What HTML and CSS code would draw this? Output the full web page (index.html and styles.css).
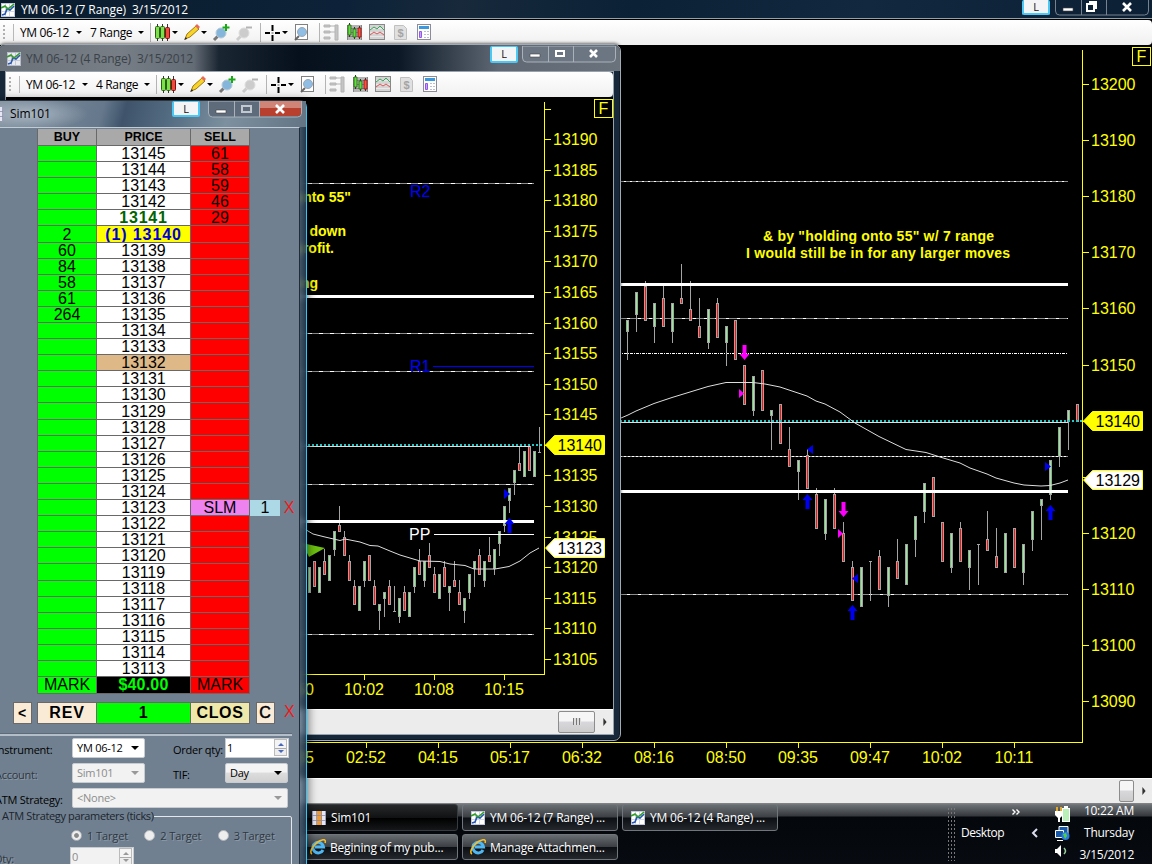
FILE: index.html
```
<!DOCTYPE html>
<html>
<head>
    <meta charset="utf-8">
    <title>YM 06-12</title>
    <link rel="stylesheet" href="styles.css">
</head>
<body>
    <svg class="defs">
        <defs>
            <symbol id="i-chart" viewBox="0 0 14 14">
                <rect x=".5" y=".5" width="13" height="13" fill="#fff" stroke="#c4c8dc"/>
                <path d="M1 4.5h12M1 8.5h12M4.5 1v12M8.5 1v12" stroke="#d4d6e8"/>
                <path d="M1 12l3-1 2-5 3 1 4-4" fill="none" stroke="#2456b8" stroke-width="1.6"/>
                <path d="M0 5l4-2 3 3 6-5" fill="none" stroke="#30a020" stroke-width="1.6"/>
            </symbol>
            <symbol id="i-grid" viewBox="0 0 14 14">
                <path d="M0 0h14v14H0z" fill="#e6e6f4"/><path d="M5 0h5v14H5z" fill="#f09a30"/>
                <path d="M0 4.5h14M0 9.5h14M4.5 0v14M9.5 0v14M.5 0v14M13.5 0v14" stroke="#8c8ca8" stroke-width=".8"/>
            </symbol>
            <symbol id="i-ie" viewBox="0 0 16 16">
                <path d="M13 11a5.3 5.3 0 1 1 .5-3H5" fill="none" stroke="#4eb6f0" stroke-width="3"/>
                <path d="M2 15C-2 13 5 3 12 1c3-1 4 1 3 3" fill="none" stroke="#f4bd28" stroke-width="1.6"/>
            </symbol>
            <symbol id="i-tools" viewBox="0 0 290 24">
                <g stroke="#b4b4b4"><path d="M1.500 3v19M111.500 3v19M170.500 3v19"/></g>
                <g stroke-width="1">
                    <path d="M8.500 4v17M13.500 4v17M18.500 4v17" stroke="#333"/>
                    <rect x="6.500" y="6.500" width="4" height="12" rx="1" fill="#7be04a" stroke="#286010"/>
                    <rect x="11.500" y="6.500" width="4" height="12" rx="1" fill="#7be04a" stroke="#286010"/>
                    <rect x="16.500" y="7.500" width="4" height="11" rx="1" fill="#f04a3c" stroke="#801010"/>
                </g>
                <path d="M23 11h6l-3 3zM52 11h6l-3 3zM133 11h6l-3 3z" fill="#000"/>
                <path d="M36 19l2-5 9-8 3 3-9 8z" fill="#f8d428" stroke="#a07810"/><path d="M46 6l2-2 3 3-2 2z" fill="#e86a5c"/><path d="M35 20l2-3 1 2z" fill="#222"/>
                <path d="M65 20l4-4" stroke="#777" stroke-width="3"/><circle cx="72" cy="13" r="5" fill="#84b6dc" stroke="#b8c8d4"/>
                <path d="M77 4v7M73.500 7.500h7" stroke="#18a818" stroke-width="2"/>
                <path d="M88 20l4-4" stroke="#ccc" stroke-width="3"/><circle cx="95" cy="13" r="5" fill="#ccc" stroke="#ddd"/><path d="M97 7.500h6" stroke="#b4b4b4" stroke-width="2"/>
                <path d="M116 13h5M126 13h5M123.500 5v6M123.500 15v6" stroke="#000" stroke-width="2"/><path d="M122.500 13h2" stroke="#555"/>
                <rect x="146.500" y="4.500" width="12" height="15" fill="#fff" stroke="#808080"/><path d="M146 20l4-4" stroke="#666" stroke-width="2"/><circle cx="153" cy="12" r="4.500" fill="#8fbde4" stroke="#9aa8b4"/>
                <path d="M175 5h6v2h-6zM175 11h6v2h-6zM175 17h6v2h-6zM186 5h3v15h-3zM181 6h5M181 12h5" fill="#c4c4c4" stroke="#b4b4b4"/>
                <rect x="198" y="5" width="15" height="15" fill="#b4b4b4"/><path d="M198 8.500h15M198 12.500h15M198 16.500h15M198.500 5v15M212.500 5v15" stroke="#777" stroke-width=".8"/>
                <path d="M200.500 3v14M205.500 7v12M210.500 6v13" stroke="#333"/>
                <path d="M199 5h3v10h-3zM204 9h3v8h-3z" fill="#5ce03c" stroke="#286010" stroke-width=".8"/><path d="M209 8h3v9h-3z" fill="#ff5040" stroke="#901010" stroke-width=".8"/>
                <rect x="220.500" y="4.500" width="15" height="15" fill="#d4d4d4" stroke="#888"/><path d="M221 8.500h14M221 12.500h14M221 16.500h14" stroke="#e8e8e8"/>
                <path d="M221 10l4-3 3 2 3-3 4 4" fill="none" stroke="#38a858"/><path d="M221 15l4-3 3 2 3-2 4 3" fill="none" stroke="#e05858"/>
                <path d="M245.500 5.500h9l3 3v11h-12z" fill="#e0e0e0" stroke="#c0c0c0"/><text x="251.500" y="17" class="dollar">$</text>
                <rect x="268.500" y="4.500" width="13" height="15" fill="#fff" stroke="#8c8c98"/><path d="M270 6h10v3h-10z" fill="#3c98dc"/><path d="M270.500 11.500h2v6h-2z" fill="#c8a0ff" stroke="#9458e8"/>
                <path d="M275 11.500h5M275 14.500h5M275 17.500h5" stroke="#b8c0d8" stroke-dasharray="2 1"/>
            </symbol>
        </defs>
    </svg>

    <div class="desktop">
        <!-- 7 range chart -->
        <div class="win win-main">
            <div class="titlebar">
                <svg class="ico14"><use href="#i-chart"/></svg><span class="title">YM 06-12 (7 Range)&nbsp; 3/15/2012</span>
                <div class="link">L</div>
                <div class="caps">
                    <svg class="cap-svg" viewBox="0 0 95 16">
                        <path d="M.5 0v11q0 4 4 4h85q4 0 4-4V0M26.500 0v15M51.500 0v15" class="cap-line"/>
                        <path d="M8 8h10v3H8z" class="glyph"/><path d="M34 2h7v7M32 4h7v7h-7z" class="glyph-o"/>
                        <path d="M68 3l8 8M76 3l-8 8" class="glyph-x"/>
                    </svg>
                </div>
            </div>
            <div class="toolbar">
                <i class="grip"></i><i class="sep"></i><span class="pick">YM 06-12</span><i class="arr"></i><span class="pick range">7 Range</span><i class="arr"></i>
                <svg class="tools"><use href="#i-tools"/></svg>
            </div>
            <svg class="chart" id="chart7" viewBox="0 45 1152 733"></svg>
            <div class="scroll"><div class="thumb thumb-sm"></div><i class="sarrow"></i></div>
        </div>

        <!-- 4 range chart -->
        <div class="win win-small">
            <div class="titlebar">
                <svg class="ico14"><use href="#i-chart"/></svg><span class="title">YM 06-12 (4 Range)&nbsp; 3/15/2012</span>
                <div class="link">L</div>
                <div class="caps">
                    <svg class="cap-svg" viewBox="0 0 95 17">
                        <path d="M.5 0v12q0 4 4 4h85q4 0 4-4V0z" fill="#6c7682" class="cap-line"/>
                        <path d="M26.500 0v16M51.500 0v16" class="cap-line"/>
                        <path d="M8 8h10v3H8z" class="glyph"/><path d="M34 5h8v5h-8z" class="glyph-o"/>
                        <path d="M68 4l7 7M75 4l-7 7" class="glyph-x"/>
                    </svg>
                </div>
            </div>
            <div class="inner">
                <div class="toolbar">
                    <i class="grip"></i><i class="sep"></i><span class="pick">YM 06-12</span><i class="arr"></i><span class="pick range">4 Range</span><i class="arr"></i>
                    <svg class="tools"><use href="#i-tools"/></svg>
                </div>
                <svg class="chart" id="chart4" viewBox="6 97 607 612"></svg>
                <div class="scroll"><div class="thumb"></div><i class="sarrow"></i></div>
            </div>
        </div>

        <div class="taskbar">
            <div class="tasks">
                <div class="task active"><svg class="ico14"><use href="#i-grid"/></svg>Sim101</div>
                <div class="task"><svg class="ico14"><use href="#i-chart"/></svg>YM 06-12 (7 Range) ...</div>
                <div class="task"><svg class="ico14"><use href="#i-chart"/></svg>YM 06-12 (4 Range) ...</div>
                <div class="task"><svg class="ico16"><use href="#i-ie"/></svg>Begining of my pub...</div>
                <div class="task"><svg class="ico16"><use href="#i-ie"/></svg>Manage Attachmen...</div>
            </div>
            <div class="dots"></div>
            <div class="desk"><svg class="more" viewBox="0 0 8 6"><path d="M1 .5l2.500 2.500L1 5.500M5 .5L7.500 3 5 5.500" fill="none" stroke="#fff" stroke-width="1.400"/></svg><span>Desktop</span></div>
            <svg class="tray" viewBox="0 0 44 61">
                <path d="M11 26l-4 4 4 4" fill="none" stroke="#dde" stroke-width="2"/>
                <rect x="36.500" y="5.500" width="7" height="13" fill="#b8f0b8" stroke="#fff"/><path d="M38 3h4v2h-4z" fill="#fff"/>
                <path d="M31 4v5M35 4v5" stroke="#e8a820" stroke-width="2"/><path d="M29 8h8v4l-3 3v4h-2v-4l-3-3z" fill="#fff"/>
                <path d="M33 23.500h9v9h-9z" fill="#1858a8" stroke="#fff"/><path d="M29.500 27.500h8v7h-8zM31 37.500h6" fill="#1858a8" stroke="#fff"/>
                <circle cx="39.500" cy="33" r="4" fill="#2878e0"/><path d="M37 31l3-1 1 3-2 3z" fill="#50d040"/>
                <path d="M29 46h2l4-4v12l-4-4h-2z" fill="#fff"/><path d="M38 45q3 3 0 6" fill="none" stroke="#9c9" stroke-width="1.500"/>
            </svg>
            <div class="clock"><span>10:22 AM</span><span>Thursday</span><span>3/15/2012</span></div>
        </div>

        <!-- DOM / order entry -->
        <div class="win win-sim">
            <div class="titlebar">
                <svg class="ico14"><use href="#i-grid"/></svg><span class="title">Sim101</span>
                <div class="link">L</div>
                <div class="caps">
                    <svg class="cap-svg" viewBox="0 0 95 17">
                        <path d="M.5 0v12q0 4 4 4h85q4 0 4-4V0z" fill="#5d6b7a" class="cap-line"/>
                        <path d="M51 0h42v12q0 3-4 3H51z" fill="#b8402e"/><path d="M51 0h42v7H51z" fill="#d08478"/>
                        <path d="M26.500 0v16M51.500 0v16" class="cap-line"/>
                        <path d="M8 9h10v3H8z" class="glyph"/><path d="M34 5h9v6h-9z" class="glyph-o dim"/>
                        <path d="M68 4l8 8M76 4l-8 8" class="glyph-x"/>
                    </svg>
                </div>
            </div>
            <div class="sim-body">
                <div class="ladder" id="ladder"></div>
                <div class="actions">
                    <div class="ab lt">&lt;</div><div class="ab rev">REV</div><div class="ab qty">1</div><div class="ab clos">CLOS</div><div class="ab c">C</div><div class="x">X</div>
                </div>
                <div class="form">
                    <div class="frow r1"><label>Instrument:</label><div class="sel">YM 06-12<i class="arr"></i></div><label class="l2">Order qty:</label><div class="spin">1<i class="ud"></i></div></div>
                    <div class="frow r2"><label class="off">Account:</label><div class="sel off">Sim101<i class="arr"></i></div><label class="l2">TIF:</label><div class="sel day">Day<i class="arr"></i></div></div>
                    <div class="frow r3"><label>ATM Strategy:</label><div class="sel wide off">&lt;None&gt;<i class="arr"></i></div></div>
                    <div class="group">
                        <div class="legend">ATM Strategy parameters (ticks)</div>
                        <div class="radios"><i class="rad on"></i><span>1 Target</span><i class="rad"></i><span>2 Target</span><i class="rad"></i><span>3 Target</span></div>
                        <div class="frow r4"><label class="off">Qty:</label><div class="spin off">0<i class="ud"></i></div></div>
                    </div>
                </div>
            </div>
        </div>
    </div>
    <script src="script.js"></script>
</body>
</html>
```

FILE: styles.css
```
body { margin: 0; background: #000; overflow: hidden; }
.defs { position: absolute; width: 0; height: 0; }
.desktop {
    position: relative; width: 1152px; height: 864px; overflow: hidden; background: #000;
    font-family: "Open Sans", "Noto Sans", sans-serif; font-size: 12px; color: #000;
}
svg { display: block; flex: none; }
i { flex: none; }
.ico14 { width: 14px; height: 14px; }
.ico16 { width: 16px; height: 16px; }

/* windows */
.win { position: absolute; box-sizing: border-box; display: flex; flex-direction: column; }
.titlebar { display: flex; align-items: flex-start; flex: none; box-sizing: border-box; white-space: nowrap; }
.titlebar .title { flex: 1; line-height: 17px; letter-spacing: -0.1px; }
.link {
    width: 24px; height: 13px; border: 2px solid #4cc8f4; border-top-width: 1px; border-radius: 2px; background: #f4f4f6;
    font-size: 11px; line-height: 13px; text-align: center; color: #111;
}
.cap-svg { width: 95px; height: 17px; }
.cap-line { stroke: #a9b1ba; stroke-width: 1; }
.win-main .cap-line { fill: none; stroke: #77828e; }
.glyph { fill: #fff; stroke: #444; stroke-width: .6; }
.glyph-o { fill: none; stroke: #fff; stroke-width: 2; }
.glyph-o.dim { stroke: #c2c8d0; }
.glyph-x { stroke: #fff; stroke-width: 2.6; }

.win-main { left: 0; top: 0; width: 1152px; height: 803px; }
.win-main > .titlebar {
    height: 20px; padding-left: 1px; color: #fff; border-bottom: 1px solid #000;
    background: linear-gradient(100deg, #0a1c2e 0%, #0d2238 30%, #17293b 40%, #0b2136 55%, #12283e 75%, #0b2035 100%);
    box-shadow: inset 0 -1px #93a0aa;
}
.win-main > .titlebar .ico14 { margin: 3px 6px 0 0; }
.win-main > .titlebar .title { line-height: 19px; }
.win-main .link { margin-right: 5px; border-top: 0; }
.win-main .caps { margin-right: 2px; }
.win-main .cap-svg { height: 16px; }

.toolbar {
    height: 25px; flex: none; display: flex; align-items: center; box-sizing: border-box; padding-left: 3px;
    background: linear-gradient(#fff, #f0f0f0); border-radius: 0 4px 4px 0; white-space: nowrap;
}
.grip { width: 2px; height: 15px; background: repeating-linear-gradient(#b0b0b0 0 2px, transparent 2px 4px); }
.sep { width: 1px; height: 17px; margin: 0 6px 0 8px; background: #b8b8b8; }
.pick { width: 53px; letter-spacing: -0.35px; }
.pick.range { width: 45px; margin-left: 8px; }
.toolbar .arr { margin-left: 3px; }
.arr { border: 3px solid transparent; border-top-color: #000; border-bottom: 0; }
.tools { width: 290px; height: 24px; margin: -1px 0 0 5px; }
.dollar { font: bold 11px "Liberation Sans", sans-serif; fill: #a4a4a4; text-anchor: middle; }
.chart { width: 100%; flex: 1; min-height: 0; background: #000; }

.scroll { height: 25px; flex: none; display: flex; justify-content: flex-end; align-items: center; background: #ececec; border-top: 1px solid #fff; box-sizing: border-box; }
.thumb {
    width: 35px; height: 20px; border: 1px solid #8c8c8c; border-radius: 2px; position: relative;
    background: linear-gradient(#f6f6f6 45%, #d8d8dc 50%, #ccc);
}
.thumb::after { content: ""; position: absolute; left: 14px; top: 6px; width: 8px; height: 7px; background: repeating-linear-gradient(90deg, #777 0 1px, #ddd 1px 3px); }
.thumb-sm { width: 13px; }
.thumb-sm::after { display: none; }
.sarrow { border: 4px solid transparent; border-left-color: #333; border-right: 0; margin: 0 6px 0 8px; transform: scaleX(.8); }

.win-small {
    left: -2px; top: 44px; width: 623px; height: 697px; padding: 0 7px 5px 7px; border: 1px solid #a2abb3; border-radius: 7px;
    background: #16283a;
    box-shadow: 0 -1px 3px #0008, inset 0 0 0 1px #0e1a26;
}
.win-small > .titlebar {
    height: 26px; margin: 0 -7px; padding: 1px 3px 0 8px;
    background: linear-gradient(90deg, #6a7179 0, #777e86 120px, #636b75 195px, #1a2632 220px, #06101d 300px, #0c1826 400px, #5f6874 500px, #6a727c 100%);
    border-radius: 6px 6px 0 0; color: #3a4249;
}
.win-small .titlebar .ico14 { margin: 6px 5px 0 0; opacity: .85; }
.win-small .title { line-height: 25px; }
.win-small .link { margin-right: 4px; height: 14px; }
.inner { flex: 1; display: flex; flex-direction: column; min-height: 0; border: 1px solid #98a2ac; margin: 0 -1px; }

/* sim101 */
.win-sim {
    left: -12px; top: 100px; width: 319px; height: 780px; padding-right: 6px; border-top: 1px solid #2a3540; border-right: 1px solid #31c8f5;
    border-radius: 0 7px 0 0; background: linear-gradient(90deg, transparent 312px, #a4c4e055 312px, #31506c88), #18293cb0;
    backdrop-filter: blur(3px); box-shadow: 2px 0 9px #0007;
}
.win-sim > .titlebar {
    height: 26px; margin-right: -6px; padding: 0 3px 0 0;
    background: radial-gradient(ellipse 60px 16px at 40px 13px, #a9b6c2, transparent), linear-gradient(105deg, #8795a2, #65788c 36%, #3f546b 43%, #526a80 56%, #7c909f 75%, #637585 100%);
}
.win-sim .titlebar .ico14 { margin: 6px 7px 0 1px; }
.win-sim .title { line-height: 25px; }
.win-sim .link { margin-right: 8px; }
.sim-body { flex: 1; background: #708090; border-top: 1px solid #c0ccd6; border-right: 1px solid #202c38; padding-top: 1px; }
.ladder, .actions { font-family: "Liberation Sans", Arial, sans-serif; font-size: 16px; }
.ladder { margin-left: 50px; }
.row { display: grid; grid-template-columns: 59px 94px 59px 31px 16px; height: 16px; line-height: 16px; text-align: center; }
.row.tall { height: 17px; line-height: 18px; }
.row.head { font-size: 12.5px; font-weight: bold; line-height: 17px; height: 17px; }
.cell { border-right: 1px solid #696969; border-bottom: 1px solid #696969; overflow: hidden; }
.cell:first-child { border-left: 1px solid #696969; margin-left: -1px; }
.head .cell { background: #a9a9a9; }
.buy { background: #0f0; }
.price { background: #fff; }
.sell { background: #f00; }
.price.last { color: #006400; font-weight: bold; letter-spacing: .8px; }
.price.pos { background: #ff0; color: #0000d8; font-weight: bold; letter-spacing: .9px; }
.price.open { background: #deb887; }
.sell.slm { background: #ee82ee; }
.stop { background: #add8e6; margin-right: 1px; }
.x { color: #f01818; }
.row.mark { line-height: 16px; }
.row.mark .price { background: #000; color: #0f0; font-weight: bold; letter-spacing: .2px; }
.actions { display: flex; margin: 8px 0 0 25px; line-height: 20px; font-weight: bold; text-align: center; letter-spacing: .8px; }
.ab { height: 20px; border: 1px solid #696969; box-sizing: content-box; background: #faebd7; }
.ab.lt { width: 17px; font-size: 14px; }
.ab.rev { width: 58px; margin-left: 5px; border-right: 0; }
.ab.qty { width: 93px; background: #0f0; }
.ab.clos { width: 58px; border-left: 0; background: #eee8aa; letter-spacing: .6px; }
.ab.c { width: 17px; margin-left: 6px; font-weight: normal; -webkit-text-stroke: .5px; }
.actions .x { margin-left: 9px; font-weight: normal; }

.form { border-top: 2px solid #b4bec8; margin: 10px 7px 0 0; padding: 1px 0 0 7px; font-size: 11px; box-shadow: 0 -1px #5d6b79; white-space: nowrap; }
.frow { display: flex; align-items: center; letter-spacing: -0.25px; }
.frow label { width: 77px; padding-top: 3px; }
.frow label.off, .radios span { color: #2f3740; text-shadow: 1px 1px #8d9aa8; }
.frow .l2 { width: 52px; margin-left: 28px; }
.sel, .spin { box-sizing: border-box; height: 20px; width: 73px; padding: 0 5px 0 4px; background: #fff; border: 1px solid #c8ccd0; border-radius: 2px; display: flex; align-items: center; justify-content: space-between; }
.sel .arr { border-width: 4px 4px 0; }
.sel.off, .spin.off { background: #f2f2f2; color: #8c8c8c; }
.sel.off .arr { border-top-color: #999; }
.sel.day { width: 63px; background: linear-gradient(#f4f4f4 45%, #ddd 50%, #d0d0d0); }
.sel.wide { width: 216px; }
.spin { width: 64px; padding: 0 1px; align-items: flex-start; border-radius: 0; line-height: 17px; }
.ud { width: 13px; height: 17px; background: linear-gradient(#f4f4f4 8px, #aaa 8px 9px, #eee 9px); border: 1px solid #bbb; box-sizing: border-box; position: relative; }
.ud::before, .ud::after { content: ""; position: absolute; left: 3px; top: 3px; border: 3px solid transparent; border-top: 0; border-bottom-color: #4868b8; }
.ud::after { top: 10px; border: 3px solid transparent; border-bottom: 0; border-top-color: #4868b8; }
.off .ud::before { border-bottom-color: #999; }
.off .ud::after { border-top-color: #999; }
.r1 { height: 21px; }
.r2 { height: 29px; }
.r3 { height: 21px; }
.group { margin-left: -20px; padding-left: 18px; border: 1px solid #e4e8ec; margin-top: 8px; height: 80px; border-radius: 2px; }
.group .legend { width: 152px; margin: -9px 0 0 3px; line-height: 15px; background: #708090; color: #1c242c; padding-left: 5px; letter-spacing: -.36px; }
.radios { display: flex; align-items: center; margin: 3px 0 0 77px; height: 18px; }
.radios span { width: 61px; margin-left: 5px; letter-spacing: -.1px; }
.rad { width: 9px; height: 9px; border: 1px solid #b0b4b8; border-radius: 50%; background: #eee; }
.rad.on { background: radial-gradient(#888 30%, #eee 45%); }
.r4 { margin-top: 3px; }
.r4 .spin { width: 64px; margin-left: -1px; }

/* taskbar */
.taskbar {
    position: absolute; left: 0; top: 803px; width: 1152px; height: 61px; padding-left: 302px; box-sizing: border-box;
    display: flex; color: #fff; background: linear-gradient(#888 0, #6b7075 2px, #34383c 13px, #04070b 14px, #070b11 100%);
}
.tasks { width: 480px; flex: none; display: grid; grid-template-columns: 156px 156px 156px; gap: 3px 4px; grid-template-rows: 27px 26px; padding-top: 1px; }
.task {
    box-sizing: border-box; border: 1px solid #70767c; border-radius: 3px; display: flex; align-items: center; gap: 5px; padding-left: 8px;
    background: linear-gradient(#686d72, #3c4044 48%, #0c0f13 52%, #24282c); letter-spacing: -0.2px; white-space: nowrap;
}
.task.active { background: linear-gradient(#26282a, #101214 50%, #000 52%, #151719); border-color: #383c40; padding-left: 9px; }
.task .ico16 { margin: 0 -1px 0 -1px; }
.dots { width: 8px; height: 54px; margin: 4px 0 0 165px; background: radial-gradient(circle, #777 .8px, transparent 1px) 0 0 / 3px 4px; }
.desk { width: 50px; margin-left: 6px; display: flex; flex-direction: column; letter-spacing: -0.45px; }
.more { width: 9px; height: 6px; margin: 6px 0 9px 50px; }
.tray { width: 44px; height: 61px; margin-left: 15px; }
.clock { flex: 1; display: flex; flex-direction: column; align-items: flex-end; padding-right: 18px; line-height: 22px; margin-top: -3px; letter-spacing: -0.25px; white-space: nowrap; }

/* chart contents */
.lbl { font: 16px "Liberation Sans", Arial, sans-serif; fill: #ff0; }
.lbl.dark { fill: #000; }
.lbl.white { fill: #fff; }
.lbl.blue { fill: #00f; }
.note { font: bold 14px "Liberation Sans", Arial, sans-serif; fill: #ff0; }
```

FILE: script.js
```
var GREEN = "#8fee8f", RED = "#ff1010";

function line(x1, y1, x2, y2, color, width, dash) {
    return '<path d="M' + x1 + ' ' + y1 + 'L' + x2 + ' ' + y2 + '" fill="none" stroke="' + color + '" stroke-width="' + (width || 1) + '"' +
        (dash ? ' stroke-dasharray="' + dash + '"' : '') + '/>';
}
function text(x, y, s, cls, anchor, len) {
    return '<text x="' + x + '" y="' + y + '" class="' + cls + '" text-anchor="' + (anchor || "start") + '"' +
        (len ? ' textLength="' + len + '"' : '') + '>' + s + '</text>';
}
function shape(d, color) {
    return '<path d="' + d + '" fill="' + color + '"/>';
}
function level(x1, x2, y, dash) {
    return line(x1, y + .5, x2, y + .5, "#8c8c8c") + line(x1, y + .5, x2, y + .5, "#fff", 1, dash);
}
function last(x1, x2, y) {
    return line(x1, y + 1.5, x2 - 14, y + 1.5, "#ddd") + line(x1, y, x2, y, "#20c8c8", 2, "2 2");
}

// bar = [high, top, bottom, low, g/r/t/b]
function candles(x, step, bars) {
    return bars.map(function (b, i) {
        var c = x + i * step, s = line(c + .5, b[0], c + .5, b[3], "#a4a4a4");
        if (b[4] == "t" || b[4] == "b") {
            var y = b[4] == "t" ? b[0] : b[3];
            return s + line(c - 1, y + .5, c + 2, y + .5, "#a4a4a4");
        }
        return s + '<rect x="' + (c - 1) + '" y="' + b[1] + '" width="3" height="' + (b[2] - b[1]) + '" fill="#a4a4a4"/>' +
            '<rect x="' + c + '" y="' + (b[1] + 1) + '" width="1" height="' + (b[2] - b[1] - 2) + '" fill="' + (b[4] == "g" ? GREEN : RED) + '"/>';
    }).join("");
}
function up(x, y) { return shape("M" + x + " " + y + "l5 6h-3v9h-4v-9h-3z", "#0000f0"); }
function down(x, y) { return shape("M" + x + " " + y + "l5-6h-3v-9h-4v9h-3z", "#f0f"); }
function tag(x, y, w, s, fill) {
    return '<path d="M' + x + ' ' + y + 'l9-9.500h' + (w - 9) + 'v19h-' + (w - 9) + 'z" fill="' + fill + '" stroke="#ff0"/>' + text(x + 12, y + 6, s, "lbl dark");
}
function curve(pts) {
    return '<polyline points="' + pts + '" fill="none" stroke="#ddd" stroke-width="1"/>';
}

var bars7 = [
    [320,320,332,360,"g"],[292,292,315,332,"g"],[281,286,321,321,"r"],[303,303,327,343,"g"],[285,298,327,327,"r"],[303,303,332,343,"g"],
    [264,298,304,304,"r"],[281,309,321,321,"r"],[298,326,338,338,"r"],[309,309,343,349,"g"],[298,303,338,338,"r"],[326,326,343,366,"g"],
    [320,320,360,360,"r"],[365,365,405,405,"r"],[376,376,411,416,"g"],[370,370,411,411,"r"],[410,410,416,450,"g"],[404,404,444,444,"r"],
    [427,449,467,467,"r"],[460,460,472,500,"g"],[449,455,489,489,"r"],[488,494,529,529,"r"],[499,499,534,540,"g"],[488,494,529,529,"r"],
    [522,533,562,562,"r"],[561,567,601,601,"r"],[567,567,607,607,"g"],[561,0,0,601,"t"],[550,556,590,590,"r"],[567,567,596,607,"g"],
    [539,561,579,579,"r"],[544,544,585,585,"g"],[516,516,540,557,"g"],[483,483,512,523,"g"],[477,477,517,517,"r"],[522,522,562,562,"r"],
    [533,533,568,573,"g"],[522,528,562,562,"r"],[550,550,568,590,"g"],[544,0,0,585,"t"],[511,539,551,551,"r"],[528,556,568,568,"r"],
    [533,533,573,573,"g"],[528,528,568,568,"r"],[544,544,573,585,"g"],[511,511,540,551,"g"],[499,499,506,540,"g"],[460,460,495,500,"g"],
    [427,427,457,467,"g"],[410,410,422,450,"g"],[404,404,422,422,"r"]
];
var bars4 = [
    [567,567,593,593,"g"],[561,561,587,587,"r"],[567,567,593,593,"g"],[549,561,575,575,"r"],[555,555,581,581,"g"],[531,531,550,556,"g"],
    [506,525,532,532,"r"],[531,537,556,556,"r"],[555,561,581,581,"r"],[580,586,605,605,"r"],[586,586,611,611,"g"],[561,561,581,587,"g"],
    [555,555,581,581,"r"],[580,586,605,605,"r"],[604,604,611,630,"g"],[592,592,599,617,"g"],[580,586,605,605,"r"],[586,0,0,611,"b"],
    [598,598,617,623,"g"],[586,592,611,611,"r"],[592,592,617,617,"g"],[567,567,587,593,"g"],[549,561,575,575,"r"],[561,561,581,587,"g"],
    [543,555,568,568,"r"],[567,574,593,593,"r"],[574,574,599,599,"g"],[561,567,587,587,"r"],[586,586,593,611,"g"],[561,580,587,587,"r"],
    [580,592,605,605,"r"],[598,598,611,623,"g"],[574,574,593,599,"g"],[561,561,569,587,"g"],[549,555,575,575,"r"],[561,561,581,587,"g"],
    [537,555,562,562,"r"],[549,549,569,575,"g"],[531,531,544,556,"g"],[506,506,526,532,"g"],[488,488,501,513,"g"],[470,470,483,495,"g"],
    [446,463,471,471,"r"],[451,451,477,477,"g"],[446,446,471,471,"r"],[451,451,477,477,"g"],[427,0,0,452,"b"]
];

// skip: prices covered by a tag
function axis(x, top, bottom, left, from, to, step, y0, scale, skip) {
    var s = line(x + .5, top, x + .5, bottom + 1, "#ff0") + line(left, bottom + .5, x, bottom + .5, "#ff0");
    for (var p = from; p >= to; p -= step) {
        var y = Math.round(y0 + (from - p) * scale);
        s += line(x, y + .5, x + 7, y + .5, "#ff0");
        if (skip.indexOf(p) < 0) s += text(x + 9, y + 6, p, "lbl");
    }
    return s;
}
function times(x, y, step, list) {
    return list.map(function (t, i) {
        return line(x + i * step + .5, y, x + i * step + .5, y + 6, "#ff0") + text(x + i * step, y + 21, t, "lbl", "middle");
    }).join("");
}

document.getElementById("chart7").innerHTML =
    axis(1082, 50, 742, 0, 13200, 13090, 10, 84, 5.611, [13140, 13130]) +
    times(294, 742, 72, ["01:35", "02:52", "04:15", "05:17", "06:32", "08:16", "08:50", "09:35", "09:47", "10:02", "10:11"]) +
    level(0, 1068, 181, "2 4") + level(0, 1068, 318, "3 8") + line(0, 353.5, 1068, 353.5, "#fff", 1, "3 1 1 1") +
    level(0, 1068, 456, "2 2") + level(0, 1068, 594, "3 8") +
    candles(627, 9, bars7) +
    line(0, 284.5, 1068, 284.5, "#fff", 3) + line(0, 491.5, 1068, 491.5, "#fff", 3) + last(0, 1082, 421) +
    curve("621,418 628,415 636,411 654,403.5 672,397.5 690,392 708,386.5 726,382.5 753,382.5 765,384 780,387 807,396 816,401 825,404 840,412 855,423 879,436.5 906,449.5 926,452.5 940,457 960,463 970,468 987,474 996,478 1014,483 1024,485 1041,486 1050,485.5 1060,483 1068,480") +
    down(744.5, 360) + down(843.5, 517) + up(807.5, 494) + up(852.5, 605) + up(1050.5, 505) +
    shape("M739 389v9l5-4.500z M838 529v9l5-4.500z", "#f0f") + shape("M813 445v9l-6-4.500z M858 574v9l-6-4.500z M1045 462v9l6-4.500z", "#0000f0") +
    text(763, 241, "&amp; by \"holding onto 55\" w/ 7 range", "note", "start", 231) +
    text(746, 258, "I would still be in for any larger moves", "note", "start", 264) +
    tag(1083.5, 421, 59, "13140", "#ff0") + tag(1083.5, 480, 59, "13129", "#fff") +
    '<rect x="1132.500" y="47.500" width="18" height="18" fill="none" stroke="#ff0"/>' + text(1141.5, 62, "F", "lbl", "middle");

document.getElementById("chart4").innerHTML =
    axis(544, 102, 674, 0, 13190, 13105, 5, 139, 6.118, [13140]) + line(544, 109.5, 551, 109.5, "#ff0") +
    times(294, 674, 70, ["09:50", "10:02", "10:08", "10:15"]) +
    [183, 333, 371, 484, 634].map(function (y) { return level(0, 534, y, "4 7"); }).join("") +
    line(433, 366.5, 534, 366.5, "#00f") + text(410, 197, "R2", "lbl blue") + text(410, 372, "R1", "lbl blue") +
    candles(309, 5, bars4) +
    line(0, 296.5, 534, 296.5, "#fff", 3) + line(0, 521.5, 534, 521.5, "#fff", 3) + last(0, 544, 445) +
    line(434, 534.5, 534, 534.5, "#fff") + text(409, 540, "PP", "lbl white") +
    curve("300,526 308,531 313,534 325,537 340,540.5 345,539 360,542 370,545.5 378,546 390,551 400,555 410,558 420,561 440,561.5 450,564 465,565.5 474,569 495,569 509,566.5 520,561 530,553 539,548") +
    up(509.5, 518) + shape("M504 489v10l6-5z", "#0000f0") + shape("M302 543l23 5-16 9z", "#6cc010") +
    text(351, 202, "onto 55\"", "note", "end") + text(346, 236, "down", "note", "end") +
    text(334, 253, "profit.", "note", "end") + text(318, 288, "long", "note", "end") +
    tag(545.5, 445, 59, "13140", "#ff0") + tag(545.5, 548, 59, "13123", "#fff") +
    '<rect x="594.500" y="99.500" width="18" height="18" fill="none" stroke="#ff0"/>' + text(603.5, 114, "F", "lbl", "middle");

// price ladder
var asks = { 13145: 61, 13144: 58, 13143: 59, 13142: 46, 13141: 29, 13123: "SLM" };
var bids = { 13140: 2, 13139: 60, 13138: 84, 13137: 58, 13136: 61, 13135: 264 };
var priceClass = { 13141: " last", 13140: " pos", 13132: " open" };
function row(cls, a, b, c, pc, sc, extra) {
    return '<div class="row' + cls + '"><div class="cell buy">' + a + '</div><div class="cell price' + pc + '">' + b +
        '</div><div class="cell sell' + sc + '">' + c + '</div>' + extra + '</div>';
}
var html = row(" head", "BUY", "PRICE", "SELL", "", "", "");
for (var p = 13145; p >= 13113; p--) {
    var tall = p == 13140 || p == 13129 || p == 13119;
    html += row(tall ? " tall" : "", bids[p] || "", p == 13140 ? "(1) 13140" : p, asks[p] || "", priceClass[p] || "",
        p == 13123 ? " slm" : "", p == 13123 ? '<div class="stop">1</div><div class="x">X</div>' : "");
}
html += row(" mark tall", "MARK", "$40.00", "MARK", "", "", "");
document.getElementById("ladder").innerHTML = html;
```
